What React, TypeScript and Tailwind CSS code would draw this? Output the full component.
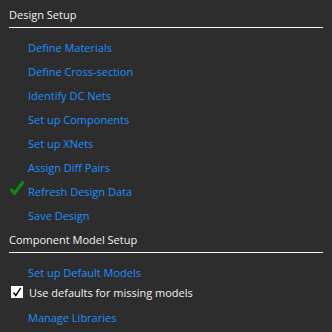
import React from 'react';

const designLinks = [
  'Define Materials',
  'Define Cross-section',
  'Identify DC Nets',
  'Set up Components',
  'Set up XNets',
  'Assign Diff Pairs',
  'Refresh Design Data',
  'Save Design',
];

function GreenCheck() {
  return (
    <svg width="18" height="18" viewBox="0 0 18 18" className="absolute left-[8px] top-0">
      <path d="M2.5 9 L6.5 13.3 L15.5 1.5" fill="none" stroke="#0f8a12" strokeWidth="3.2" strokeLinejoin="miter" />
    </svg>
  );
}

function CheckBox() {
  return (
    <svg width="12" height="12" viewBox="0 0 12 12" className="mt-[3px] shrink-0">
      <rect x="0" y="0" width="12" height="12" fill="#ffffff" />
      <path d="M2.5 6.5 L4.8 9.5 L9.8 1.8" fill="none" stroke="#000000" strokeWidth="1.4" />
    </svg>
  );
}

function Header({ title }: { title: string }) {
  return (
    <>
      <div className="h-6 pl-[9px] leading-6 text-[#f2f2f2]">{title}</div>
      <div className="mx-[9px] h-px bg-white" />
    </>
  );
}

export default function App() {
  return (
    <div
      className="h-[332px] w-[332px] overflow-hidden bg-[#2d2d2d] pt-[3px] text-[11px]"
      style={{ fontFamily: '"Open Sans", "Noto Sans", sans-serif' }}
    >
      <Header title="Design Setup" />
      <div className="mt-[8px]">
        {designLinks.map((label) => (
          <div key={label} className="relative h-6 pl-[28px] leading-6 text-[#1e8fff]">
            {label === 'Refresh Design Data' ? <GreenCheck /> : null}
            {label}
          </div>
        ))}
      </div>
      <Header title="Component Model Setup" />
      <div className="mt-[10px]">
        <div className="h-5 pl-[28px] leading-5 text-[#1e8fff]">Set up Default Models</div>
        <div className="flex h-5 items-start gap-[6px] pl-[11px] leading-5 text-[#f2f2f2]">
          <CheckBox />
          <span>Use defaults for missing models</span>
        </div>
        <div className="mt-[5px] h-5 pl-[28px] leading-5 text-[#1e8fff]">Manage Libraries</div>
      </div>
    </div>
  );
}
